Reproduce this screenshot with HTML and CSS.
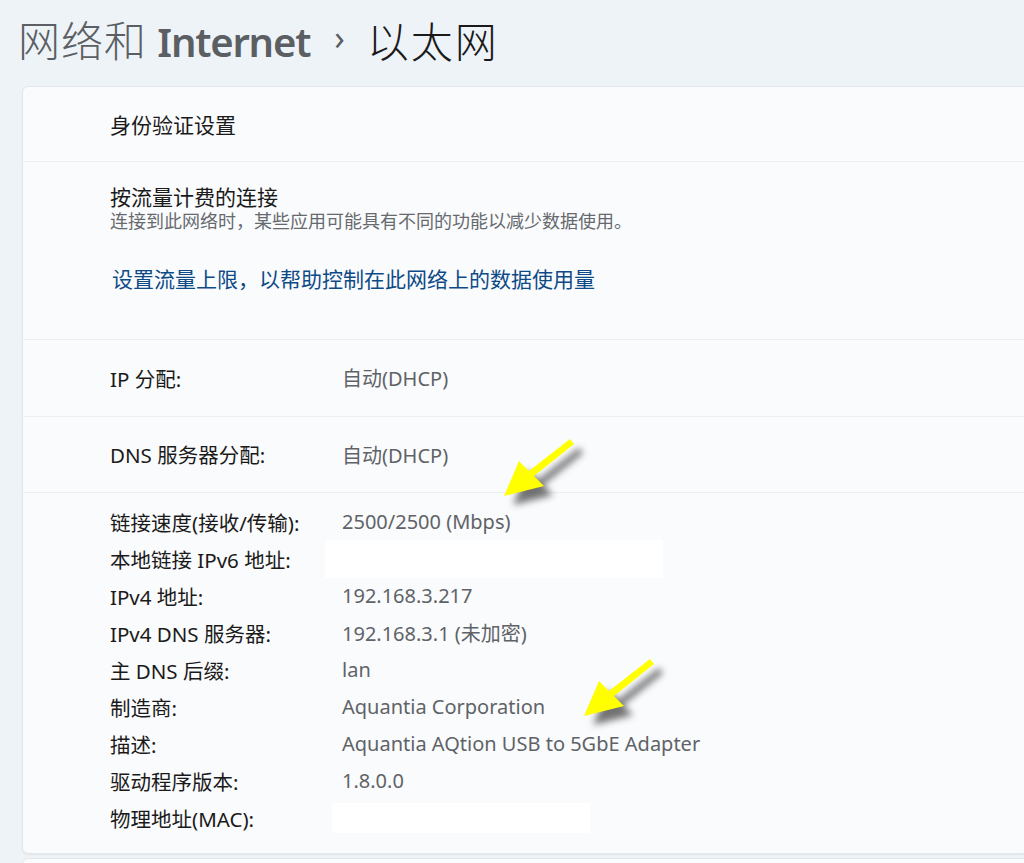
FILE: index.html
```html
<!DOCTYPE html>
<html lang="zh-CN">
<head>
<meta charset="utf-8">
<title>以太网</title>
<link rel="stylesheet" href="styles.css">
</head>
<body>
<header class="header">
  <span class="crumb">网络和 <b>Internet</b></span>
  <span class="chev">›</span>
  <span class="current">以太网</span>
</header>
<main class="card">
  <section class="row row-auth">身份验证设置</section>
  <section class="row row-metered">
    <div class="title">按流量计费的连接</div>
    <div class="sub">连接到此网络时，某些应用可能具有不同的功能以减少数据使用。</div>
    <a class="link" href="#">设置流量上限，以帮助控制在此网络上的数据使用量</a>
  </section>
  <section class="row row-kv">
    <span class="k">IP 分配:</span><span class="v">自动(DHCP)</span>
  </section>
  <section class="row row-kv">
    <span class="k">DNS 服务器分配:</span><span class="v">自动(DHCP)</span>
  </section>
  <section class="row props">
    <span class="k">链接速度(接收/传输):</span><span class="v">2500/2500 (Mbps)</span>
    <span class="k">本地链接 IPv6 地址:</span><span class="v"><span class="redact r1"></span></span>
    <span class="k">IPv4 地址:</span><span class="v">192.168.3.217</span>
    <span class="k">IPv4 DNS 服务器:</span><span class="v">192.168.3.1 (未加密)</span>
    <span class="k">主 DNS 后缀:</span><span class="v">lan</span>
    <span class="k">制造商:</span><span class="v">Aquantia Corporation</span>
    <span class="k">描述:</span><span class="v">Aquantia AQtion USB to 5GbE Adapter</span>
    <span class="k">驱动程序版本:</span><span class="v">1.8.0.0</span>
    <span class="k">物理地址(MAC):</span><span class="v"><span class="redact r2"></span></span>
  </section>
</main>
<div class="card next"></div>

<svg class="arrow a1" width="110" height="90" viewBox="0 0 110 90" aria-hidden="true">
  <defs>
    <filter id="sh" x="-30%" y="-30%" width="160%" height="160%">
      <feGaussianBlur stdDeviation="3.5"/>
    </filter>
  </defs>
  <g transform="translate(9,9)" fill="#5a5a5a" opacity="0.85" filter="url(#sh)">
    <polygon points="4,66 19,31 29,41 70,9 74,14 34,46 44,56"/>
  </g>
  <polygon fill="#ffff00" points="4,66 19,31 29,41 70,9 74,14 34,46 44,56"/>
</svg>
<svg class="arrow a2" width="110" height="90" viewBox="0 0 110 90" aria-hidden="true">
  <g transform="translate(9,9)" fill="#5a5a5a" opacity="0.85" filter="url(#sh)">
    <polygon points="4,66 19,31 29,41 70,9 74,14 34,46 44,56"/>
  </g>
  <polygon fill="#ffff00" points="4,66 19,31 29,41 70,9 74,14 34,46 44,56"/>
</svg>
</body>
</html>
```

FILE: styles.css
```css
html, body {
  margin: 0;
  padding: 0;
}
body {
  background: #eef3f8;
  font-family: "Noto Sans", "Noto Sans CJK SC", sans-serif;
  color: #1a1a1a;
  width: 1024px;
  height: 863px;
  overflow: hidden;
  position: relative;
}
.header {
  height: 86px;
  display: flex;
  align-items: center;
  padding-left: 18px;
  box-sizing: border-box;
  padding-bottom: 6px;
  font-size: 42px;
  line-height: 50px;
  white-space: nowrap;
}
.crumb {
  color: #5b5f64;
  font-family: "Noto Sans CJK SC", sans-serif;
  font-weight: 300;
  letter-spacing: 1px;
}
.crumb b {
  font-family: "Noto Sans", "Noto Sans CJK SC", sans-serif;
  font-weight: 600;
  font-size: 40px;
  letter-spacing: -1.2px;
}
.chev {
  color: #5b5f64;
  font-size: 34px;
  margin: 0 22px 0 24px;
  position: relative;
  top: -3px;
}
.current {
  color: #1a1a1a;
  font-family: "Noto Sans CJK SC", sans-serif;
  font-weight: 300;
  letter-spacing: 2px;
}
.card {
  margin-left: 22px;
  background: #fafbfd;
  border: 1px solid #e3e7ec;
  border-right: none;
  border-radius: 6px 0 0 6px;
  box-shadow: 0 1px 2px rgba(0,0,0,0.06);
}
.card.next {
  margin-top: 4px;
  height: 30px;
}
.row {
  border-top: 1px solid #eceff3;
  padding-left: 87px;
  box-sizing: border-box;
  font-size: 20px;
}
.row:first-child {
  border-top: none;
}
.row-auth {
  height: 74px;
  display: flex;
  align-items: center;
  font-size: 21px;
}
.row-metered {
  height: 178px;
  padding-top: 21px;
}
.row-metered .title {
  line-height: 28px;
  font-size: 21px;
}
.row-metered .sub {
  font-size: 18px;
  line-height: 20px;
  color: #666a6e;
}
.row-metered .link {
  display: inline-block;
  margin-top: 33px;
  margin-left: 2px;
  font-size: 21px;
  color: #0d4a86;
  text-decoration: none;
  line-height: 30px;
}
.row-kv {
  height: 76.5px;
  display: grid;
  grid-template-columns: 232px 1fr;
  align-items: center;
}
.k {
  color: #1a1a1a;
  font-size: 20.5px;
}
.v {
  color: #5f6367;
}
.props {
  display: grid;
  grid-template-columns: 232px 1fr;
  grid-auto-rows: 37px;
  align-items: center;
  padding-top: 10px;
  padding-bottom: 17px;
}
.redact {
  display: block;
  background: #ffffff;
}
.r1 {
  width: 338px;
  height: 38px;
  margin-left: -17px;
}
.r2 {
  width: 258px;
  height: 30px;
  margin-left: -10px;
}
.arrow {
  position: absolute;
}
.a1 {
  left: 500px;
  top: 430px;
}
.a2 {
  left: 580px;
  top: 650px;
}
```
